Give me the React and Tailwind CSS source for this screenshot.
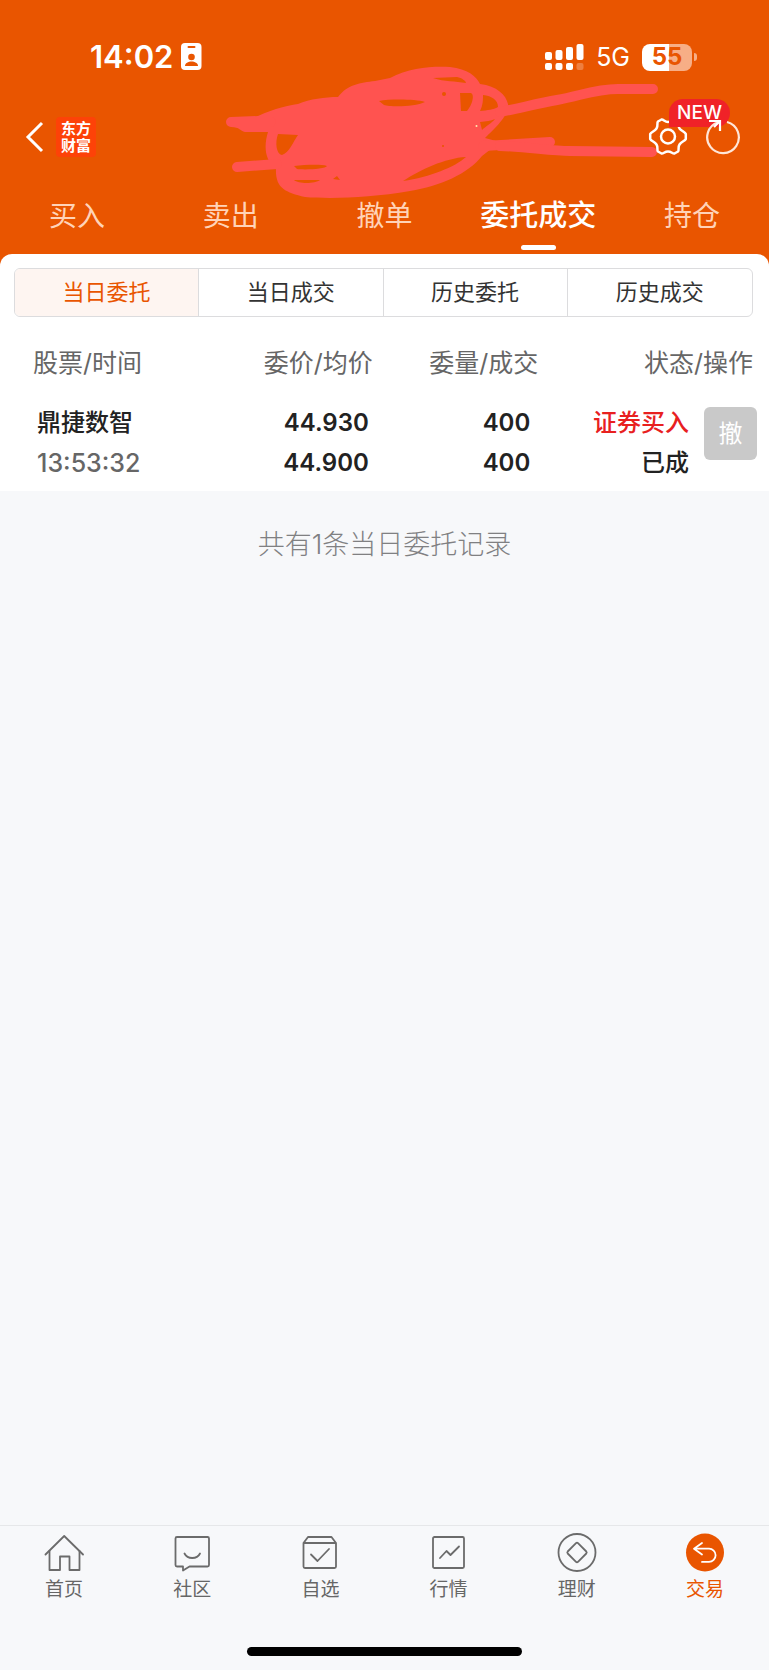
const tabs = ["买入", "卖出", "撤单", "委托成交", "持仓"];
const segments = ["当日委托", "当日成交", "历史委托", "历史成交"];

const orders = [
  {
    name: "鼎捷数智",
    time: "13:53:32",
    price: "44.930",
    avg: "44.900",
    amount: "400",
    filled: "400",
    side: "证券买入",
    status: "已成",
  },
];

const HomeIcon = () => (
  <>
    <path d="M1.5 21.5 20.2 3 39 21.5" />
    <path d="M5.5 18v19H16V23.5h9.500V37h10V18" />
  </>
);

const CommunityIcon = () => (
  <>
    <path d="M5 4h30.500a1.500 1.500 0 0 1 1.500 1.500V32a1.500 1.500 0 0 1-1.500 1.500H17.500L11 37.500V33.500H5A1.500 1.500 0 0 1 3.500 32V5.500A1.500 1.500 0 0 1 5 4z" />
    <path d="M12.500 20.500c3 6 12.500 6 15.500 0" />
  </>
);

const WatchIcon = () => (
  <>
    <path d="M3.500 10 8 4h23.500L36 10v23.500a1.500 1.500 0 0 1-1.500 1.500H5a1.500 1.500 0 0 1-1.500-1.500zM3.500 10H36" />
    <path d="m11 21.500 6.500 6.500L29 16" />
  </>
);

const MarketIcon = () => (
  <>
    <rect x="4" y="4" width="31" height="31" rx="1.500" />
    <path d="m11 25 6.500-7 4 4L30 13.500" />
  </>
);

const WealthIcon = () => (
  <>
    <circle cx="20" cy="19.500" r="18.500" />
    <path d="M19 10.200a1.500 1.500 0 0 1 2 0l8.300 8.300a1.500 1.500 0 0 1 0 2L21 28.800a1.500 1.500 0 0 1-2 0l-8.300-8.300a1.500 1.500 0 0 1 0-2z" />
  </>
);

const TradeIcon = () => (
  <>
    <circle cx="20" cy="19.500" r="19" fill="#e95500" stroke="none" />
    <path
      d="M17 10 9 15.700l8 5.800M9.500 15.700H24a6.600 6.600 0 0 1 0 13.200h-7"
      stroke="#fff"
    />
  </>
);

const navItems = [
  { label: "首页", Icon: HomeIcon },
  { label: "社区", Icon: CommunityIcon },
  { label: "自选", Icon: WatchIcon },
  { label: "行情", Icon: MarketIcon },
  { label: "理财", Icon: WealthIcon },
  { label: "交易", Icon: TradeIcon, active: true },
];

const Scribble = () => (
  <svg
    className="absolute left-[26%] top-[50px] pointer-events-none"
    width="480"
    height="160"
    viewBox="0 0 480 160"
    fill="none"
    stroke="#ff5350"
    strokeWidth="10"
    strokeLinecap="round"
    aria-hidden="true"
  >
    <path
      d="M31 67 58 66C75 58 90 55 98 54 110 49 125 47 138 47 148 34 160 33 175 31L190 28C210 17 235 16 250 17 268 19 276 26 280 34 297 36 306 45 308 54 309 66 295 78 285 88L300 92 282 106C268 124 240 136 210 141 170 148 130 149 105 147 85 142 75 138 76 118 64 110 64 95 68 82L45 82C40 81 40 77 31 77z"
      fill="#ff5350"
      stroke="none"
    />
    <path d="M31 72h40M37 117l40-3" />
    <path d="M300 62C320 58 340 53 357 50 380 46 395 39 418 39H453" />
    <path d="M283 96 350 92" />
    <path d="M300 96C330 97 350 101 370 101L452 102" />
    <g fill="#e95500" stroke="none">
      <path d="M78 84 98 85C93 92 89 103 82 105 76 104 75 92 78 84z" />
      <path d="M179 51C190 49 215 49 225 52 215 57 190 57 184 55z" />
      <path d="M233 28 257 27C262 28 266 31 266 33 255 31 245 32 233 28z" />
      <path d="M260 43 271 43C275 45 272 55 267 61L261 61z" />
      <path d="M283 45C292 46 298 50 298 57 293 60 288 60 280 61 283 55 283 50 283 45z" />
      <path d="M94 116C105 115 120 114 127 116 126 119 105 120 97 119z" />
      <path d="M94 130H120C115 134 98 134 94 130zM133 129l4-3 3 4z" />
      <path d="M203 131C220 120 245 108 266 107 255 117 230 127 203 131z" />
      <path d="M280 72C286 71 291 71 295 69 292 73 286 76 282 80z" />
      <circle cx="244" cy="44" r="2" />
      <circle cx="243" cy="96" r="1" />
    </g>
    <circle cx="276.500" cy="76" r="1" fill="#ffe9b0" stroke="none" />
  </svg>
);

const StatusBar = () => (
  <div className="flex items-center justify-between h-[42px] pl-[90px] pr-[72px]">
    <div className="flex items-center gap-2">
      <span className="text-[31px] leading-10 font-semibold">14:02</span>
      <svg width="21" height="28" viewBox="0 0 21 28" aria-hidden="true">
        <rect width="20.500" height="27" rx="4" fill="#fff" />
        <g fill="#e95500">
          <rect x="6.500" y="3" width="8" height="2" rx="1" />
          <circle cx="10.500" cy="14" r="3.300" />
          <path d="M4 23c0-6 13-6 13 0z" />
        </g>
      </svg>
    </div>
    <div className="flex items-center">
      <svg width="39" height="28" viewBox="0 0 39 28" fill="#fff" aria-hidden="true">
        <rect x="0" y="9" width="7" height="8" rx="2" />
        <rect x="10.500" y="7" width="7" height="10" rx="2" />
        <rect x="21" y="4" width="7" height="13" rx="2" />
        <rect x="31.500" y="1" width="7" height="16" rx="2" />
        <rect x="0" y="20" width="7" height="7" rx="2" />
        <rect x="10.500" y="20" width="7" height="7" rx="2" />
        <rect x="21" y="20" width="7" height="7" rx="2" />
        <rect x="31.500" y="20" width="7" height="7" rx="2" opacity="0.25" />
      </svg>
      <span className="ml-3 text-[25px] leading-10">5G</span>
      <div className="ml-3 flex items-center gap-0.5">
        <div className="w-[50px] h-[27px] rounded-lg bg-linear-to-r from-white from-55% to-[#f7ae86] to-55% flex items-center justify-center text-[24px] leading-6 font-bold text-[#e95500]">
          55
        </div>
        <div className="w-[3px] h-2 rounded-r-full bg-[#f7ae86]" />
      </div>
    </div>
  </div>
);

const TopBar = () => (
  <div className="relative z-10 flex items-center justify-between h-[118px] pl-6 pr-7">
    <div className="flex items-center gap-3">
      <button type="button" aria-label="返回">
        <svg width="20" height="32" viewBox="0 0 20 32" fill="none" stroke="#fff" strokeWidth="3">
          <path d="M18 2 4 16l14 14" />
        </svg>
      </button>
      <div className="w-[40px] h-[40px] rounded bg-[#fd4208] flex flex-col items-center justify-center text-[15px] leading-[17px] font-bold">
        <span>东方</span>
        <span>财富</span>
      </div>
    </div>
    <div className="flex items-center gap-[17px]">
      <button type="button" aria-label="设置" className="relative">
        <svg width="40" height="40" viewBox="0 0 40 40" fill="none" stroke="#fff" strokeWidth="2.500" strokeLinejoin="round">
          <path d="M13.500 2.500C15.500 2 16.500 5 20 5S24.500 2 26.500 2.500L30 4.500C31.500 6 29.500 9 31.500 11.500S37 15 37.800 17V22C37 24 33.500 24.500 31.500 27.500S31.500 33 30 34.500L26.500 36.500C24.500 37 23.500 34.500 20 34.500S15.500 37 13.500 36.500L10 34.500C8.500 33 10.500 30.500 8.500 27.500S3 24 2.200 22V17C3 15 6.500 14.500 8.500 11.500S8.500 6 10 4.500z" />
          <circle cx="20" cy="19.500" r="7" />
        </svg>
        <span className="absolute left-[21px] -top-[18px] w-[61px] h-7 rounded-t-[14px] rounded-br-[14px] bg-[#f02228] text-[19px] leading-7 font-medium text-center">
          NEW
        </span>
      </button>
      <button type="button" aria-label="刷新" className="relative">
        <svg width="36" height="40" viewBox="0 0 36 40" fill="none" stroke="#ffe6d8" strokeWidth="2.200">
          <path d="M22 5a15.800 15.800 0 1 1-9 .300" />
          <path d="M4 4H15V14M15 4 9 10" stroke="#fff" />
        </svg>
      </button>
    </div>
  </div>
);

const OrderTable = () => (
  <table className="w-full table-fixed text-[24px] leading-10">
    <thead>
      <tr className="h-[86px] text-[25px] text-[#666]">
        <th scope="col" className="w-[27%] pt-1.5 pl-[33px] text-left font-normal">股票/时间</th>
        <th scope="col" className="w-[22%] pt-1.5 pr-1 text-right font-normal">委价/均价</th>
        <th scope="col" className="w-[21%] pt-1.5 text-right font-normal">委量/成交</th>
        <th scope="col" className="pt-1.5 pr-4 text-right font-normal">状态/操作</th>
      </tr>
    </thead>
    <tbody>
      {orders.map((o) => (
        <tr key={o.time} className="align-top font-medium text-[#222]">
          <td className="pl-[37px] pb-2">
            <div>{o.name}</div>
            <div className="text-[25px] text-[#666]">{o.time}</div>
          </td>
          <td className="pr-2 pb-2 text-right font-semibold">
            <div>{o.price}</div>
            <div>{o.avg}</div>
          </td>
          <td className="pr-2 pb-2 text-right font-semibold">
            <div>{o.amount}</div>
            <div>{o.filled}</div>
          </td>
          <td className="pr-3 pb-2">
            <div className="flex justify-end gap-[15px]">
              <div className="text-right">
                <div className="text-[#e8201f]">{o.side}</div>
                <div>{o.status}</div>
              </div>
              <button type="button" className="mt-1 w-[53px] h-[53px] rounded-md bg-[#c9c9c9] text-[24px] font-normal text-white">
                撤
              </button>
            </div>
          </td>
        </tr>
      ))}
    </tbody>
  </table>
);

const App = () => {
  return (
    <div className="min-h-screen flex flex-col bg-[#f7f8fa] font-[Inter,'Noto_Sans_CJK_SC',sans-serif]">
      <div className="relative bg-[#e95500] pt-9 text-white">
        <Scribble />
        <StatusBar />
        <TopBar />

        {/* Main tabs */}
        <nav className="relative grid grid-cols-5 h-[58px]">
          {tabs.map((t) => (
            <button
              key={t}
              type="button"
              className={
                t === "委托成交"
                  ? "flex flex-col items-center text-[29px] leading-10 font-medium whitespace-nowrap"
                  : "flex flex-col items-center text-[28px] leading-10 text-[#ffd3b8]"
              }
            >
              {t}
              {t === "委托成交" && <span className="mt-[9px] w-[35px] h-[5px] rounded-full bg-white" />}
            </button>
          ))}
        </nav>

        {/* Orders card */}
        <section className="rounded-t-xl bg-white pt-3.5">
          <div className="ml-3.5 mr-4 grid grid-cols-4 h-[49px] rounded-md border border-[#dcdcde] divide-x divide-[#dcdcde] overflow-hidden">
            {segments.map((s, i) => (
              <button
                key={s}
                type="button"
                className={
                  i === 0
                    ? "bg-[#fef5f1] text-[22px] text-[#e95500]"
                    : "text-[22px] text-[#333]"
                }
              >
                {s}
              </button>
            ))}
          </div>
          <OrderTable />
        </section>
      </div>

      <main className="flex-1 pt-[34px]">
        <p className="text-center text-[27px] leading-10 font-light text-[#808082]">共有1条当日委托记录</p>
      </main>

      {/* Bottom navigation */}
      <footer className="border-t border-[#e6e7e9] pt-[7px] pb-3.5">
        <nav className="grid grid-cols-6">
          {navItems.map(({ label, Icon, active }) => (
            <a
              key={label}
              href="#"
              className={
                active
                  ? "flex flex-col items-center text-[19px] leading-[34px] text-[#e95500]"
                  : "flex flex-col items-center text-[19px] leading-[34px] text-[#666]"
              }
            >
              <svg
                width="40"
                height="40"
                viewBox="0 0 40 40"
                fill="none"
                stroke="#6b6b6b"
                strokeWidth="1.800"
                strokeLinecap="round"
                strokeLinejoin="round"
                aria-hidden="true"
              >
                <Icon />
              </svg>
              {label}
            </a>
          ))}
        </nav>
        <div className="mx-auto mt-10 w-[275px] h-[9px] rounded-full bg-black" />
      </footer>
    </div>
  );
};

export default App;
